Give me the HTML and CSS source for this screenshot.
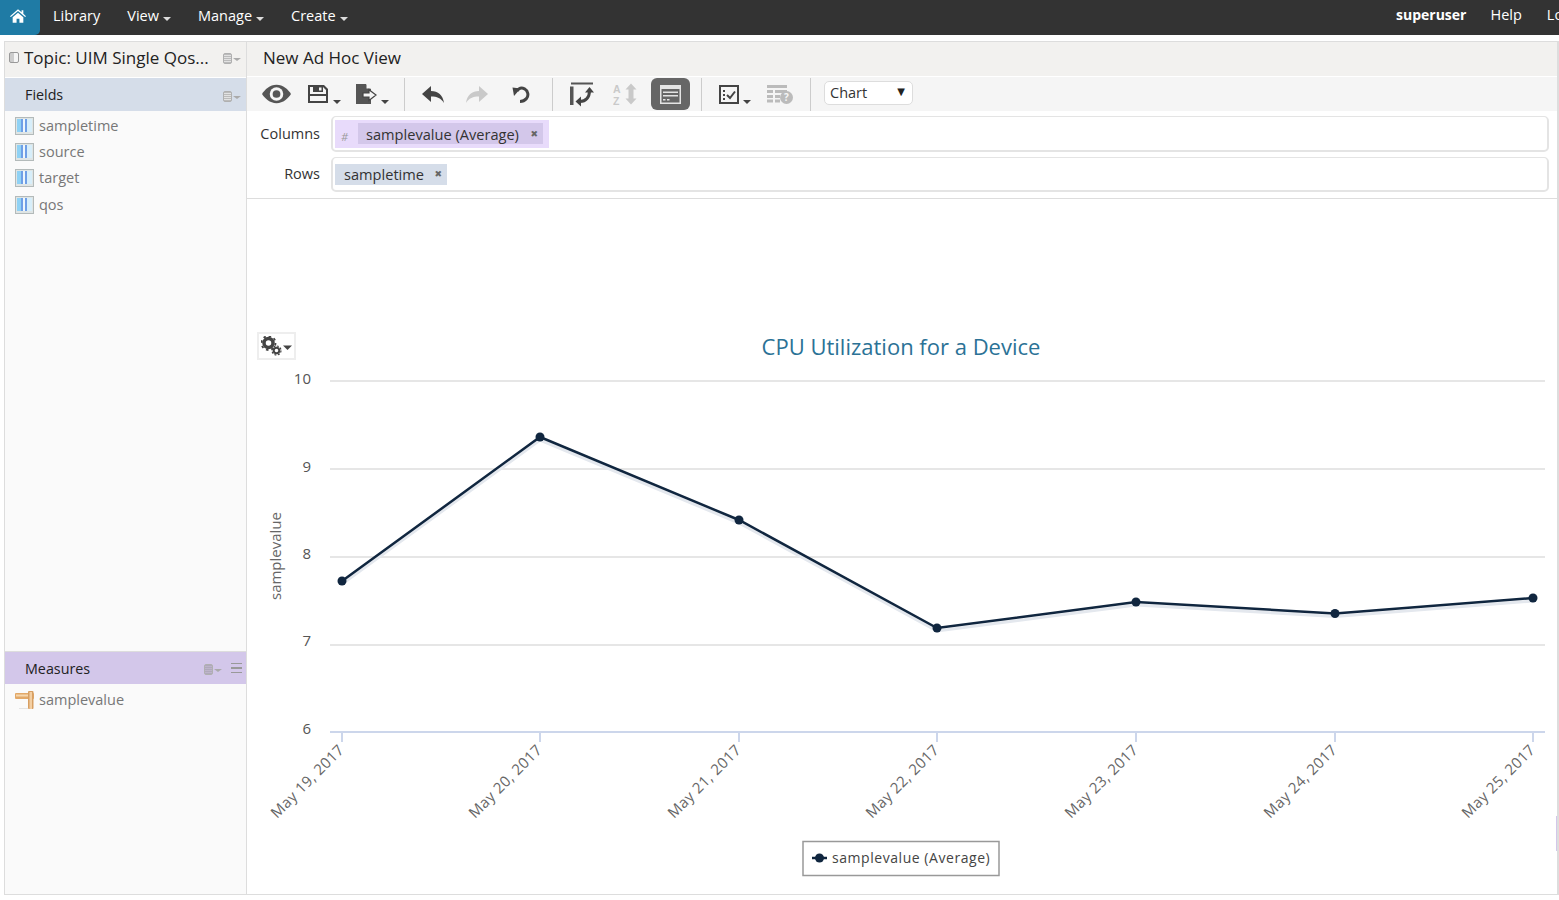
FILE: index.html
```html
<!DOCTYPE html>
<html lang="en">
<head>
    <meta charset="UTF-8">
    <title>New Ad Hoc View</title>
    <link rel="stylesheet" href="styles.css">
</head>
<body>
    <div class="navbar">
        <div class="nav-left">
            <a class="home-btn">
                <svg width="16" height="14" viewBox="0 0 18 15"><path fill="#fff" d="M9 0 L13 3.4 V1 H15 V5.1 L18 7.7 L17 8.7 L9 2 L1 8.7 L0 7.7 Z M3 9 L9 3.8 L15 9 V15 H10.6 V10.5 H7.4 V15 H3 Z"/></svg>
            </a>
            <a class="nav-item">Library</a>
            <a class="nav-item">View<i class="nav-caret"></i></a>
            <a class="nav-item">Manage<i class="nav-caret"></i></a>
            <a class="nav-item">Create<i class="nav-caret"></i></a>
        </div>
        <div class="nav-right">
            <a class="nav-user">superuser</a>
            <a class="nav-link">Help</a>
            <a class="nav-link">Log Out</a>
        </div>
    </div>

    <div class="app">
        <div class="sidebar">
            <div class="topic-head">
                <i class="collapse-box"></i>
                <span class="topic-title">Topic: UIM Single Qos...</span>
                <i class="list-icon"></i>
            </div>
            <div class="panel-head fields-head">
                <span>Fields</span>
                <i class="list-icon"></i>
            </div>
            <ul class="field-list">
                <li><svg class="field-icon" viewBox="0 0 19 18"><rect x="0.5" y="0.5" width="18" height="17" fill="#dfe5e5" stroke="#b3baba"/><rect x="2" y="2" width="15" height="13" fill="#8fd2f5"/><rect x="6" y="2" width="2" height="13" fill="#6f9fe6"/><rect x="8" y="2" width="2" height="13" fill="#eef6fc"/><rect x="10" y="2" width="2" height="13" fill="#6f9fe6"/><rect x="12" y="2" width="5" height="13" fill="#d7eefa"/></svg>sampletime</li>
                <li><svg class="field-icon" viewBox="0 0 19 18"><rect x="0.5" y="0.5" width="18" height="17" fill="#dfe5e5" stroke="#b3baba"/><rect x="2" y="2" width="15" height="13" fill="#8fd2f5"/><rect x="6" y="2" width="2" height="13" fill="#6f9fe6"/><rect x="8" y="2" width="2" height="13" fill="#eef6fc"/><rect x="10" y="2" width="2" height="13" fill="#6f9fe6"/><rect x="12" y="2" width="5" height="13" fill="#d7eefa"/></svg>source</li>
                <li><svg class="field-icon" viewBox="0 0 19 18"><rect x="0.5" y="0.5" width="18" height="17" fill="#dfe5e5" stroke="#b3baba"/><rect x="2" y="2" width="15" height="13" fill="#8fd2f5"/><rect x="6" y="2" width="2" height="13" fill="#6f9fe6"/><rect x="8" y="2" width="2" height="13" fill="#eef6fc"/><rect x="10" y="2" width="2" height="13" fill="#6f9fe6"/><rect x="12" y="2" width="5" height="13" fill="#d7eefa"/></svg>target</li>
                <li><svg class="field-icon" viewBox="0 0 19 18"><rect x="0.5" y="0.5" width="18" height="17" fill="#dfe5e5" stroke="#b3baba"/><rect x="2" y="2" width="15" height="13" fill="#8fd2f5"/><rect x="6" y="2" width="2" height="13" fill="#6f9fe6"/><rect x="8" y="2" width="2" height="13" fill="#eef6fc"/><rect x="10" y="2" width="2" height="13" fill="#6f9fe6"/><rect x="12" y="2" width="5" height="13" fill="#d7eefa"/></svg>qos</li>
            </ul>
            <div class="panel-head measures-head">
                <span>Measures</span>
                <i class="list-icon dark"></i>
                <i class="menu-icon"></i>
            </div>
            <ul class="field-list measure-list">
                <li><svg class="field-icon" viewBox="0 0 19 18"><rect x="0" y="2" width="19" height="6" rx="1" fill="#e2a868"/><rect x="1" y="3.500" width="17" height="2" fill="#f6d7ae"/><rect x="13" y="0" width="5.500" height="18" rx="1" fill="#d79f62"/><rect x="14.500" y="1" width="2.500" height="17" fill="#f3cfa3"/><rect x="4" y="17" width="9" height="1" fill="#e4e4e4"/></svg>samplevalue</li>
            </ul>
        </div>

        <div class="main">
            <div class="view-title">New Ad Hoc View</div>
            <div class="toolbar">
                <div class="tool-group group-file">
                    <a class="tool"><svg width="29" height="20" viewBox="0 0 30 20"><path fill="#555" d="M15 0.500 C22 0.500 27 5.500 30 10 C27 14.500 22 19.500 15 19.500 C8 19.500 3 14.500 0 10 C3 5.500 8 0.500 15 0.500 Z"/><circle cx="15" cy="10" r="7" fill="#f5f5f5"/><circle cx="15" cy="10" r="4" fill="#555"/></svg></a>
                    <a class="tool tool-wide"><svg width="20" height="20" viewBox="0 0 20 20"><path fill="#444" fill-rule="evenodd" d="M0 1 H16 L20 5 V19 H0 Z M2 3 V17 H18 V6 L15 3 Z"/><path fill="#444" d="M5 2 H15 V8 H5 Z"/><rect x="11" y="3.500" width="2.500" height="3" fill="#f5f5f5"/><path fill="#444" d="M2 10 H18 V12 H2 Z"/></svg><i class="tool-caret"></i></a>
                    <a class="tool tool-wide"><svg width="21" height="21" viewBox="0 0 21 21"><path fill="#555" d="M0 0 H10 L15 5 V20 H0 Z"/><path fill="#f5f5f5" d="M10.500 0 V4.500 H15 V0 Z"/><path fill="#f5f5f5" stroke="#444" stroke-width="1.200" d="M7 9 H13 V5.800 L20 11 L13 16.500 V13 H7 Z"/></svg><i class="tool-caret"></i></a>
                </div>
                <div class="tool-group group-edit">
                    <a class="tool"><svg width="22" height="17" viewBox="0 0 22 17"><path fill="#444" d="M9 0 V5 C16 5 21 9 22 17 C19 12 15 10.500 9 10.500 V16 L0 8 Z"/></svg></a>
                    <a class="tool"><svg width="22" height="17" viewBox="0 0 22 17"><path fill="#c9c9c9" d="M13 0 V5 C6 5 1 9 0 17 C3 12 7 10.500 13 10.500 V16 L22 8 Z"/></svg></a>
                    <a class="tool"><svg width="18" height="17" viewBox="0 0 18 17"><path fill="none" stroke="#444" stroke-width="3" d="M5 5 C7 2 10 1.500 12.500 2.800 C16 4.800 17 9.500 14.500 12.500 C12.800 14.500 10.500 15.500 8 15.500"/><path fill="#444" d="M0.500 1.500 L8.500 2.500 L2 10 Z"/></svg></a>
                </div>
                <div class="tool-group group-layout">
                    <a class="tool"><svg width="25" height="25" viewBox="0 0 25 25"><path fill="#555" d="M2 0.500 H24 V2.500 H2 Z M1 4.500 H4.500 V23 H1 Z"/><path fill="none" stroke="#444" stroke-width="3" d="M20.500 9 C20.500 15 17 19.500 11 19.500"/><path fill="#444" d="M16 10.500 L20.500 5 L25 10.500 Z M12 14.500 L12 24.500 L6.500 19.500 Z"/></svg></a>
                    <a class="tool"><svg width="24" height="24" viewBox="0 0 24 24"><text class="sort-letter" x="0" y="10.500">A</text><text class="sort-letter" x="0" y="22.700">Z</text><path fill="#c9c9c9" d="M18 1.500 L23.500 7.500 H20.500 V16.500 H23.500 L18 22.500 L12.500 16.500 H15.500 V7.500 H12.500 Z"/></svg></a>
                    <a class="tool tool-active"><svg width="21" height="19" viewBox="0 0 21 19"><path fill="#e4e4e4" fill-rule="evenodd" d="M0 0 H21 V19 H0 Z M1.500 4 V17.500 H19.500 V4 Z"/><rect x="3" y="6.500" width="15" height="1.500" fill="#e4e4e4"/><rect x="3" y="10" width="15" height="1.500" fill="#e4e4e4"/><rect x="3" y="14" width="2.500" height="1.500" fill="#e4e4e4"/><rect x="7" y="14" width="2.500" height="1.500" fill="#e4e4e4"/></svg></a>
                </div>
                <div class="tool-group group-extra">
                    <a class="tool tool-wide check-tool"><svg width="20" height="19" viewBox="0 0 20 19"><rect x="1" y="1" width="18" height="17" fill="none" stroke="#444" stroke-width="2"/><path fill="#444" d="M4 5 H6 V7 H4 Z M4 9 H6 V11 H4 Z M4 13 H6 V15 H4 Z"/><path fill="none" stroke="#444" stroke-width="2" d="M8 10 L11 13 L16 6.500"/></svg><i class="tool-caret"></i></a>
                    <a class="tool"><svg width="26" height="20" viewBox="0 0 26 20"><path fill="#bbb" d="M0 1 H20 V4 H0 Z M0 6 H6 V9 H0 Z M8 6 H20 V9 H8 Z M0 11 H6 V14 H0 Z M8 11 H13 V14 H8 Z M0 15.500 H6 V18.500 H0 Z M8 15.500 H13 V18.500 H8 Z"/><circle cx="19.500" cy="13.500" r="6.500" fill="#bbb"/><text class="help-mark" x="19.500" y="17">?</text></svg></a>
                </div>
                <div class="type-select">Chart<span class="type-arrow">▼</span></div>
            </div>

            <div class="drop-row">
                <label class="drop-label">Columns</label>
                <div class="drop-box">
                    <div class="column-wrap">
                        <span class="hash">#</span>
                        <span class="pill pill-measure">samplevalue (Average)<i class="pill-x">✖</i></span>
                    </div>
                </div>
            </div>
            <div class="drop-row rows-row">
                <label class="drop-label">Rows</label>
                <div class="drop-box">
                    <span class="pill pill-field">sampletime<i class="pill-x">✖</i></span>
                </div>
            </div>

            <div class="chart-area">
                <a class="gear-btn">
                    <svg width="32" height="20" viewBox="0 0 32 20"><g fill="none" stroke="#444"><circle cx="7.500" cy="7" r="4.500" stroke-width="3.500"/><circle cx="7.500" cy="7" r="7" stroke-width="1.800" stroke-dasharray="2.500 3"/><circle cx="15.500" cy="14.500" r="2.800" stroke-width="2"/><circle cx="15.500" cy="14.500" r="4.500" stroke-width="1.200" stroke-dasharray="2 1.500"/></g><path fill="#444" d="M22 9.500 H31 L26.500 14 Z"/></svg>
                </a>
                <svg class="chart" viewBox="247 199 1312 695" width="1312" height="695">
                    <text class="chart-title" x="901" y="355">CPU Utilization for a Device</text>

                    <g class="grid">
                        <line x1="330" x2="1545" y1="381" y2="381"/>
                        <line x1="330" x2="1545" y1="469" y2="469"/>
                        <line x1="330" x2="1545" y1="557" y2="557"/>
                        <line x1="330" x2="1545" y1="645" y2="645"/>
                    </g>
                    <g class="axis">
                        <line x1="330" x2="1545" y1="732" y2="732"/>
                        <line x1="342" x2="342" y1="732" y2="742"/>
                        <line x1="540" x2="540" y1="732" y2="742"/>
                        <line x1="739" x2="739" y1="732" y2="742"/>
                        <line x1="937" x2="937" y1="732" y2="742"/>
                        <line x1="1136" x2="1136" y1="732" y2="742"/>
                        <line x1="1335" x2="1335" y1="732" y2="742"/>
                        <line x1="1533" x2="1533" y1="732" y2="742"/>
                    </g>

                    <g class="y-labels">
                        <text x="311" y="384">10</text>
                        <text x="311" y="472">9</text>
                        <text x="311" y="559">8</text>
                        <text x="311" y="646">7</text>
                        <text x="311" y="734">6</text>
                    </g>
                    <text class="y-title" transform="translate(281 556) rotate(-90)">samplevalue</text>

                    <g class="x-labels">
                        <text transform="translate(345 751) rotate(-45)">May 19, 2017</text>
                        <text transform="translate(543 751) rotate(-45)">May 20, 2017</text>
                        <text transform="translate(742 751) rotate(-45)">May 21, 2017</text>
                        <text transform="translate(940 751) rotate(-45)">May 22, 2017</text>
                        <text transform="translate(1139 751) rotate(-45)">May 23, 2017</text>
                        <text transform="translate(1338 751) rotate(-45)">May 24, 2017</text>
                        <text transform="translate(1536 751) rotate(-45)">May 25, 2017</text>
                    </g>

                    <polyline class="series-shadow" points="342,581 540,437 739,520 937,628 1136,602 1335,613.500 1533,598"/>
                    <polyline class="series" points="342,581 540,437 739,520 937,628 1136,602 1335,613.500 1533,598"/>
                    <g class="markers">
                        <circle cx="342" cy="581" r="4.500"/>
                        <circle cx="540" cy="437" r="4.500"/>
                        <circle cx="739" cy="520" r="4.500"/>
                        <circle cx="937" cy="628" r="4.500"/>
                        <circle cx="1136" cy="602" r="4.500"/>
                        <circle cx="1335" cy="613.500" r="4.500"/>
                        <circle cx="1533" cy="598" r="4.500"/>
                    </g>

                    <rect class="legend-box" x="803" y="841.500" width="196" height="34"/>
                    <line class="legend-line" x1="812" x2="827" y1="858" y2="858"/>
                    <circle class="legend-dot" cx="819.500" cy="858" r="4.500"/>
                    <text class="legend-text" x="832" y="863">samplevalue (Average)</text>
                </svg>
                <i class="edge-tab"></i>
            </div>
        </div>
    </div>
</body>
</html>
```

FILE: styles.css
```css
*{
    margin: 0;
    padding: 0;
    box-sizing: border-box;
}

html, body{
    height: 900px;
    overflow: hidden;
    background: #fff;
}

body{
    font-family: "Open Sans", "Noto Sans", sans-serif;
    color: #333;
}

li{
    list-style: none;
}

/* top bar */
.navbar{
    display: flex;
    height: 35px;
    background: #333;
    color: #fff;
    overflow: hidden;
}

.nav-left{
    display: flex;
    flex: 1;
    align-items: center;
}

.nav-right{
    display: flex;
    flex: none;
    width: 163px;
    height: 29px;
    align-items: center;
    white-space: nowrap;
    font-size: 14.500px;
}

.home-btn{
    display: flex;
    align-items: center;
    justify-content: center;
    width: 40px;
    height: 35px;
    margin-right: 13px;
    padding: 0 4px 3px 0;
    background: #1f7ba5;
    border-bottom-right-radius: 5px;
}

.nav-item{
    margin-right: 27px;
    padding-bottom: 4px;
    font-size: 14.500px;
    white-space: nowrap;
}

.nav-caret{
    display: inline-block;
    margin-left: 4px;
    vertical-align: 0;
    border-top: 4px solid #ddd;
    border-left: 4px solid transparent;
    border-right: 4px solid transparent;
}

.nav-user{
    margin-right: 24px;
    font-size: 14px;
    font-weight: 700;
}

.nav-link{
    margin-right: 25px;
}

/* page */
.app{
    display: flex;
    height: 854px;
    margin: 6px 0 0 4px;
    border-top: 1px solid #ddd;
    border-left: 1px solid #ddd;
    border-right: 2px solid #ddd;
    border-bottom: 1px solid #ddd;
}

.sidebar{
    display: flex;
    flex-direction: column;
    flex: none;
    width: 242px;
    background: #fafafa;
    border-right: 1px solid #ddd;
}

.topic-head{
    display: flex;
    align-items: center;
    height: 36px;
    padding: 0 0 5px 4px;
    background: #f2f1ef;
    border-bottom: 1px solid #fff;
}

.collapse-box{
    width: 10px;
    height: 11px;
    margin-right: 5px;
    border: 1px solid #999;
    border-radius: 2px;
    background: linear-gradient(to right, #ccc 45%, #f5f5f5 45%);
}

.topic-title{
    flex: 1;
    font-size: 17px;
    color: #222;
    white-space: nowrap;
}

.list-icon{
    position: relative;
    flex: none;
    width: 9px;
    height: 11px;
    margin: 3px 14px 0 0;
    border-radius: 2px;
    background: repeating-linear-gradient(to bottom, #bbb 0, #bbb 1px, #e2e2e2 1px, #e2e2e2 2px);
    border: 1px solid #b0b0b0;
}

.list-icon::after{
    content: "";
    position: absolute;
    left: 9px;
    top: 4px;
    border-top: 3px solid #aaa;
    border-left: 4px solid transparent;
    border-right: 4px solid transparent;
}

.list-icon.dark{
    margin-right: 18px;
    background: repeating-linear-gradient(to bottom, #b0a8bc 0, #b0a8bc 1px, #bdb5c9 1px, #bdb5c9 2px);
}

.menu-icon{
    flex: none;
    width: 11px;
    height: 10px;
    margin-right: 4px;
    border-top: 1px solid #999;
    border-bottom: 1px solid #999;
    background: linear-gradient(to bottom, transparent 3px, #999 3px, #999 5px, transparent 5px);
}

.panel-head{
    display: flex;
    align-items: center;
    height: 33px;
    padding-left: 20px;
    font-size: 14.300px;
    color: #222;
}

.panel-head span{
    flex: 1;
}

.fields-head{
    background: #d5dde9;
}

.measures-head{
    background: #d3c7ea;
    border-top: 1px solid #ddd;
}

.field-list{
    flex: 1;
    padding: 1px 0 0 10px;
    font-size: 14.500px;
    color: #777;
}

.field-list li{
    display: flex;
    align-items: center;
    height: 26.300px;
}

.measure-list{
    flex: none;
    height: 210px;
    padding-top: 2px;
}

.field-icon{
    flex: none;
    width: 19px;
    height: 18px;
    margin-top: 1px;
    margin-right: 5px;
}

/* right side */
.main{
    display: flex;
    flex-direction: column;
    flex: 1;
    min-width: 0;
}

.view-title{
    height: 35px;
    padding-left: 16px;
    background: #f2f1ef;
    border-bottom: 1px solid #fff;
    font-size: 17px;
    line-height: 31px;
    color: #222;
}

.toolbar{
    display: flex;
    align-items: center;
    flex: none;
    height: 34px;
    padding-left: 7px;
    background: #f5f5f5;
}

.tool-group{
    display: flex;
    align-items: center;
    height: 33px;
    border-right: 1px solid #ccc;
}

.group-file{
    width: 151px;
}

.group-edit{
    width: 148px;
    padding-left: 6px;
}

.group-layout{
    width: 149px;
    padding-left: 6px;
}

.group-extra{
    width: 109px;
    padding-left: 6px;
}

.tool{
    position: relative;
    display: flex;
    flex: none;
    align-items: center;
    justify-content: center;
    width: 44px;
    height: 33px;
}

.tool-wide{
    width: 48px;
    padding-right: 8px;
}

.check-tool{
    width: 50px;
    padding-right: 8px;
}

.tool-caret{
    position: absolute;
    left: 35px;
    top: 22px;
    border-top: 4px solid #444;
    border-left: 4px solid transparent;
    border-right: 4px solid transparent;
}

.tool-active{
    width: 39px;
    height: 32px;
    margin: 0 2px 0 4px;
    background: #666;
    border-radius: 6px;
}

.sort-letter{
    font-family: "Liberation Sans", sans-serif;
    font-size: 10.500px;
    font-weight: 700;
    fill: #c9c9c9;
}

.help-mark{
    font-size: 10px;
    font-weight: 700;
    fill: #f5f5f5;
    text-anchor: middle;
}

.type-select{
    position: relative;
    width: 89px;
    height: 24px;
    margin: 0 0 2px 13px;
    padding-left: 5px;
    background: #fff;
    border: 1px solid #ddd;
    border-radius: 5px;
    font-size: 14.500px;
    line-height: 22px;
    color: #333;
}

.type-arrow{
    position: absolute;
    right: 7px;
    top: -1px;
    font-size: 10px;
    font-family: "DejaVu Sans", sans-serif;
    color: #222;
}

.drop-row{
    display: flex;
    align-items: center;
    flex: none;
    height: 36px;
    margin-top: 5px;
}

.rows-row{
    height: 35px;
}

.drop-label{
    width: 84px;
    padding: 0 11px 2px 0;
    text-align: right;
    font-size: 14.500px;
    color: #333;
}

.drop-box{
    display: flex;
    align-items: center;
    width: 1218px;
    height: 100%;
    padding-left: 2px;
    background: #fff;
    border: 2px solid #e4e4e4;
    border-top-width: 1px;
    border-radius: 5px;
}

.column-wrap{
    display: flex;
    align-items: center;
    height: 28px;
    padding: 0 6px;
    background: #e8dbfb;
}

.hash{
    width: 17px;
    padding-top: 5px;
    font-size: 11px;
    font-style: italic;
    color: #999;
}

.pill{
    display: flex;
    align-items: center;
    height: 21px;
    padding-left: 8px;
    font-size: 14.600px;
    color: #333;
    white-space: nowrap;
}

.pill-measure{
    background: #d3c7ea;
}

.pill-field{
    padding-left: 9px;
    background: #d5dde9;
}

.pill-x{
    width: 24px;
    padding-right: 5px;
    text-align: right;
    font-size: 9px;
    font-style: normal;
    font-family: "DejaVu Sans", sans-serif;
    color: #666;
}

.pill-field .pill-x{
    width: 23px;
}

.chart-area{
    position: relative;
    flex: 1;
    min-height: 0;
    margin-top: 6px;
    border-top: 1px solid #ddd;
    overflow: hidden;
}

.chart{
    display: block;
}

.gear-btn{
    position: absolute;
    left: 10px;
    top: 133px;
    display: flex;
    align-items: center;
    justify-content: center;
    width: 39px;
    height: 28px;
    border: 2px solid #eee;
    background: #fff;
}

.chart-title{
    text-anchor: middle;
    font-size: 22px;
    fill: #2b7296;
}

.grid line{
    stroke: #e6e6e6;
    stroke-width: 2;
}

.axis line{
    stroke: #ccd6eb;
    stroke-width: 2;
}

.y-labels text{
    text-anchor: end;
    font-size: 15px;
    fill: #555;
}

.y-title{
    text-anchor: middle;
    font-size: 15px;
    fill: #666;
}

.x-labels text{
    text-anchor: end;
    font-size: 15px;
    letter-spacing: 0.300px;
    fill: #666;
}

.series{
    fill: none;
    stroke: #10263f;
    stroke-width: 2.500;
}

.series-shadow{
    fill: none;
    stroke: #e4e8ee;
    stroke-width: 3;
    transform: translateY(3px);
}

.markers circle, .legend-dot{
    fill: #10263f;
}

.legend-box{
    fill: #fff;
    stroke: #999;
    stroke-width: 1.500;
}

.legend-line{
    stroke: #10263f;
    stroke-width: 2.500;
}

.legend-text{
    font-size: 14px;
    letter-spacing: 0.550px;
    fill: #444;
}

.edge-tab{
    position: absolute;
    right: 0;
    top: 617px;
    width: 1px;
    height: 35px;
    background: #d3c7ea;
}
```
